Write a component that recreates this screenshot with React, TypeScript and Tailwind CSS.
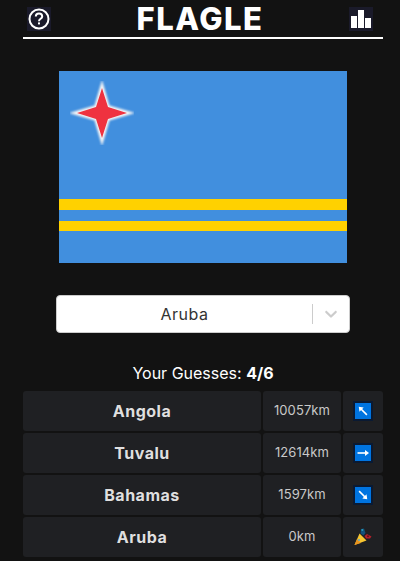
const FONT = "font-['Inter',sans-serif]";

const guesses = [
  { name: "Angola", distance: "10057km", arrow: "nw" },
  { name: "Tuvalu", distance: "12614km", arrow: "e" },
  { name: "Bahamas", distance: "1597km", arrow: "se" },
  { name: "Aruba", distance: "0km", arrow: "win" },
];

const HelpIcon = () => (
  <svg width="24" height="24" viewBox="0 0 24 24" fill="none">
    <circle cx="12" cy="12" r="9.5" stroke="white" strokeWidth="2" />
    <path d="M8.8 9.6c0-1.9 1.4-3 3.2-3s3.2 1.1 3.2 2.8c0 2.4-3.2 2.4-3.2 4.8" stroke="white" strokeWidth="2" />
    <rect x="11" y="15.4" width="2" height="2" fill="white" />
  </svg>
);

const StatsIcon = () => (
  <svg width="24" height="24" viewBox="0 0 24 24" fill="white">
    <rect x="2" y="9" width="6" height="12" />
    <rect x="9" y="3" width="6" height="18" />
    <rect x="16" y="11" width="6" height="10" />
  </svg>
);

const Star = () => (
  <svg width="64" height="64" viewBox="0 0 64 64" className="absolute left-[10.7px] top-[10px]">
    <defs>
      <filter id="soft"><feGaussianBlur stdDeviation="0.8" /></filter>
      <filter id="softer"><feGaussianBlur stdDeviation="0.4" /></filter>
    </defs>
    <path d="M32 -1 L39.5 24.5 L65 32 L39.5 39.5 L32 65 L24.5 39.5 L-1 32 L24.5 24.5 Z" fill="#f6f6f6" filter="url(#soft)" />
    <path d="M32 7 L38 26 L57 32 L38 38 L32 57 L26 38 L7 32 L26 26 Z" fill="#ef3340" filter="url(#softer)" />
  </svg>
);

const PartyPopper = () => (
  <svg width="18" height="18" viewBox="0 0 18 18">
    <path d="M0.5 17 L5.5 5.5 L12.5 12.5 Z" fill="#f7c531" />
    <path d="M0.5 17 L3 11 L7 15 Z" fill="#e8941f" />
    <circle cx="5" cy="12" r="0.9" fill="#4aa3d8" />
    <path d="M7 1 L10 0.5 L11.5 5 L9.5 7.5 L6.5 5.5 Z" fill="#12507a" />
    <circle cx="8.3" cy="2" r="1" fill="#2a9bb8" />
    <path d="M10.5 8 L13 6 L17.5 8.5 L16 10.5 L12 10.5 Z" fill="#b3202a" />
    <circle cx="14" cy="8.3" r="1" fill="#601015" />
  </svg>
);

const ArrowTile = ({ arrow }: { arrow: string }) => {
  if (arrow === "win") return <PartyPopper />;
  const rotate = arrow === "nw" ? "rotate-[-135deg]" : arrow === "se" ? "rotate-45" : "";
  return (
    <div className="flex size-4 items-center justify-center bg-[#0074e0] outline-2 outline-[#0a1a33]">
      <svg width="14" height="14" viewBox="0 0 14 14" className={rotate} fill="none">
        <path d="M1.5 7 H10.5" stroke="white" strokeWidth="1.6" />
        <path d="M9 4 L13 7 L9 10 Z" fill="white" />
      </svg>
    </div>
  );
};

export default function App() {
  return (
    <div className={`${FONT} flex h-[561px] w-[400px] flex-col items-center overflow-hidden bg-[#121212] pl-1.5 text-white`}>
      <header className="flex h-[39px] w-[360px] shrink-0 items-start justify-between border-b-2 border-white pr-2.5 pl-1">
        <button className="mt-[7px] flex size-6 items-center justify-center bg-[#1a1a2a]">
          <HelpIcon />
        </button>
        <h1 className="text-[31px] leading-[37px] font-extrabold tracking-[1.5px]">FLAGLE</h1>
        <button className="mt-[7px] flex size-6 items-center justify-center bg-[#1a1a2a]">
          <StatsIcon />
        </button>
      </header>

      <div className="relative mt-8 h-[192px] w-[288px] shrink-0 bg-[#418fde]">
        <Star />
        <div className="mt-[128px] h-[11px] bg-[#ffd100]" />
        <div className="mt-[10.5px] h-[10.5px] bg-[#ffd100]" />
      </div>

      <div className="mt-8 flex h-[38px] w-[294px] shrink-0 items-center rounded border border-[#cccccc] bg-white text-[#333333]">
        <div className="flex-1 text-center text-base tracking-[0.5px]">Aruba</div>
        <div className="h-5 w-px bg-[#cccccc]" />
        <div className="flex w-9 justify-center">
          <svg width="20" height="20" viewBox="0 0 20 20" fill="#cccccc">
            <path d="M4.5 7.2 C5 6.7 5.6 6.7 6.1 7.2 L10 11 L13.9 7.2 C14.4 6.7 15 6.7 15.5 7.2 C16 7.7 16 8.3 15.5 8.8 L10.8 13.3 C10.3 13.8 9.7 13.8 9.2 13.3 L4.5 8.8 C4 8.3 4 7.7 4.5 7.2 Z" />
          </svg>
        </div>
      </div>

      <p className="mt-[30px] text-base leading-5">
        Your Guesses: <span className="font-bold">4/6</span>
      </p>

      <div className="mt-2 flex w-[360px] flex-col gap-0.5">
        {guesses.map((g) => (
          <div key={g.name} className="flex h-10 gap-0.5 text-[#dfdfdf]">
            <div className="flex w-[238px] items-center justify-center rounded-[3px] bg-[#1f2023] text-base font-bold tracking-[0.5px]">{g.name}</div>
            <div className="flex w-[78px] items-center justify-center rounded-[3px] bg-[#1f2023] text-[13px] tracking-[0.1px] text-[#c9c9c9]">{g.distance}</div>
            <div className="flex w-10 items-center justify-center rounded-[3px] bg-[#1f2023]">
              <ArrowTile arrow={g.arrow} />
            </div>
          </div>
        ))}
      </div>
    </div>
  );
}
